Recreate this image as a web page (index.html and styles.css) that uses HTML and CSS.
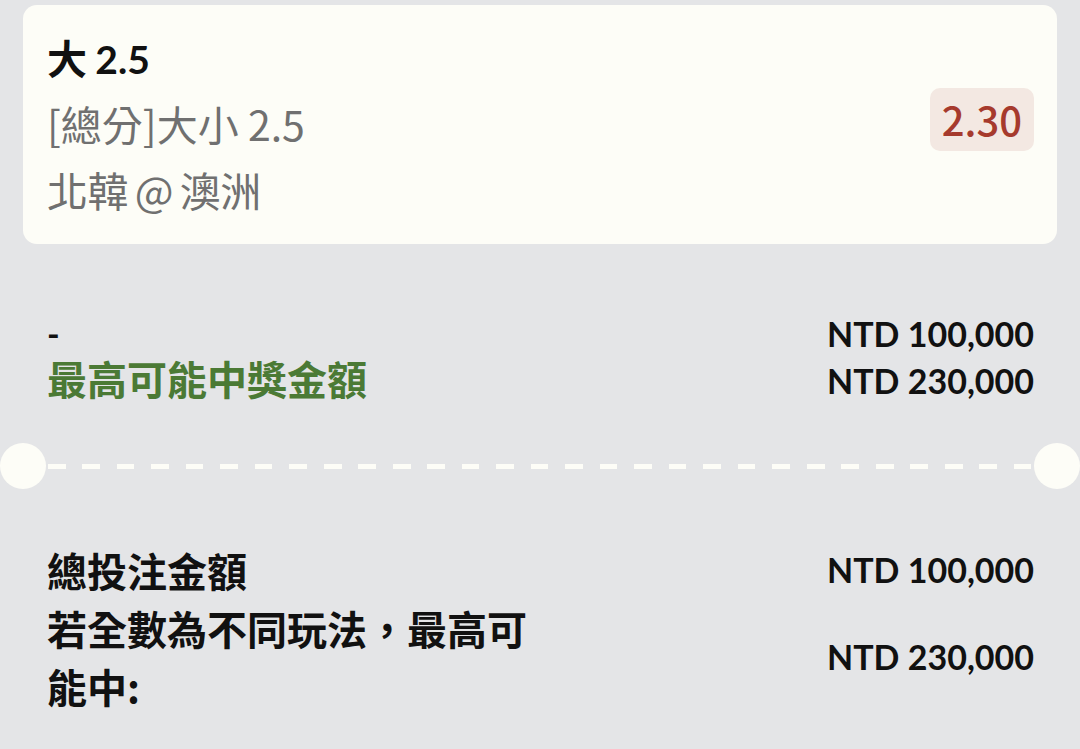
FILE: index.html
```html
<!DOCTYPE html>
<html lang="zh-Hant">
<head>
<meta charset="utf-8">
<title>投注單</title>
<link rel="stylesheet" href="styles.css">
</head>
<body>
<main class="slip">
  <section class="bet-card">
    <div class="bet-info">
      <div class="bet-pick"><span class="zh">大</span> <span class="num">2.5</span></div>
      <div class="bet-line">[總分]大小 2.5</div>
      <div class="bet-line teams">北韓 @ 澳洲</div>
    </div>
    <div class="odds">2.30</div>
  </section>

  <section class="summary">
    <div class="summary-left">
      <div class="sum-line">-</div>
      <div class="sum-line win-label">最高可能中獎金額</div>
    </div>
    <div class="summary-right">
      <div class="sum-line">NTD 100,000</div>
      <div class="sum-line">NTD 230,000</div>
    </div>
  </section>

  <div class="divider"></div>

  <section class="totals">
    <div class="total-row">
      <div class="total-label">總投注金額</div>
      <div class="total-value">NTD 100,000</div>
    </div>
    <div class="total-row">
      <div class="total-label">若全數為不同玩法，最高可能中:</div>
      <div class="total-value">NTD 230,000</div>
    </div>
  </section>
</main>
</body>
</html>
```

FILE: styles.css
```css
* {
  box-sizing: border-box;
}

html, body {
  margin: 0;
  padding: 0;
}

body {
  background: #e4e5e7;
  font-family: Lato, "Noto Sans CJK TC", sans-serif;
  font-size: 34px;
  font-weight: 700;
  color: #111111;
  width: 1080px;
  height: 749px;
  overflow: hidden;
}

.zh {
  font-family: "Noto Sans CJK TC", sans-serif;
  font-size: 40px;
}

.slip {
  padding: 5px 23px 0;
}

.bet-card {
  background: #fdfdf7;
  border-radius: 14px;
  height: 239px;
  padding: 19px 23px 0 24px;
  display: flex;
  justify-content: space-between;
  align-items: flex-start;
}

.bet-info {
  display: flex;
  flex-direction: column;
}

.bet-pick {
  line-height: 66px;
  height: 66px;
}

.bet-pick .num {
  font-size: 39px;
}

.bet-line {
  font-family: "Noto Sans CJK TC", sans-serif;
  font-weight: 400;
  font-size: 41px;
  color: #707070;
  line-height: 66px;
  height: 66px;
}

.bet-line.teams {
  letter-spacing: -0.5px;
  word-spacing: -2px;
}

.odds {
  margin-top: 64px;
  background: #f3e8e2;
  color: #a63a2d;
  font-family: "Noto Sans CJK TC", sans-serif;
  font-weight: 500;
  font-size: 40px;
  line-height: 63px;
  height: 63px;
  padding: 0 12px;
  border-radius: 10px;
}

.summary {
  display: flex;
  justify-content: space-between;
  padding: 66px 23px 0 24px;
}

.sum-line {
  line-height: 47px;
  height: 47px;
}

.summary-right {
  text-align: right;
}

.win-label {
  color: #4b7a35;
  font-family: "Noto Sans CJK TC", sans-serif;
  font-size: 40px;
  line-height: 43px;
}

.divider {
  position: relative;
  height: 46px;
  margin: 39px -23px 0;
  background-image: repeating-linear-gradient(to right, #fdfdf7 0 17.5px, transparent 17.5px 34.5px);
  background-size: calc(100% - 94px) 5px;
  background-position: 48px center;
  background-repeat: no-repeat;
}

.divider::before,
.divider::after {
  content: "";
  position: absolute;
  top: 0;
  width: 46px;
  height: 46px;
  border-radius: 50%;
  background: #fdfdf7;
}

.divider::before {
  left: 0;
}

.divider::after {
  right: 0;
}

.totals {
  padding: 52px 23px 0 24px;
}

.total-row {
  display: flex;
  justify-content: space-between;
  align-items: center;
}

.total-label {
  font-family: "Noto Sans CJK TC", sans-serif;
  font-size: 40px;
  max-width: 500px;
  line-height: 58px;
}

.total-value {
  line-height: 58px;
}
```
